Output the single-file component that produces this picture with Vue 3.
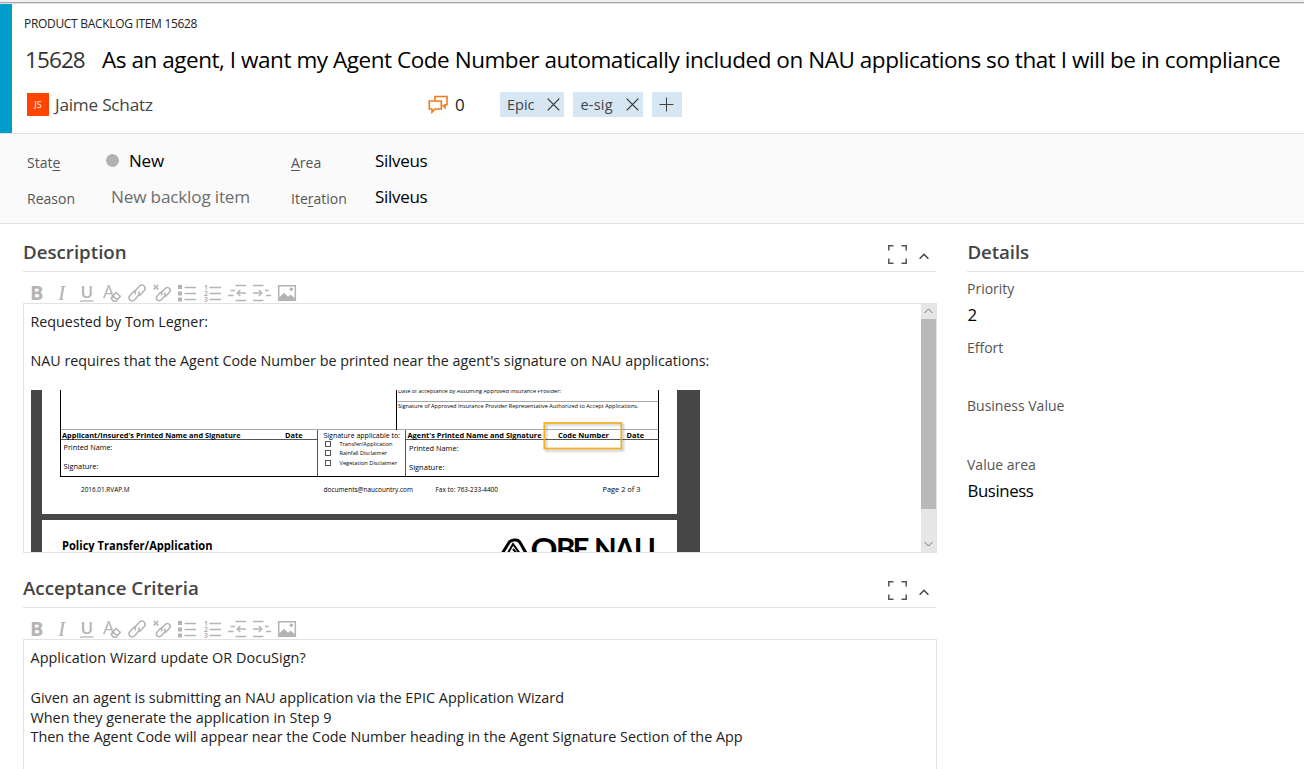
<script setup>
const tags = ['Epic', 'e-sig']

const tools = ['bold', 'italic', 'underline', 'clear', 'link', 'unlink', 'bullets', 'numbers', 'outdent', 'indent', 'image']

const sections = [
  { id: 'description', title: 'Description' },
  { id: 'criteria', title: 'Acceptance Criteria' },
]

const criteria = [
  { key: 'q', text: 'Application Wizard update OR DocuSign?' },
  { key: 'blank', text: '\u00a0' },
  { key: 'given', text: 'Given an agent is submitting an NAU application via the EPIC Application Wizard' },
  { key: 'when', text: 'When they generate the application in Step 9' },
  { key: 'then', text: 'Then the Agent Code will appear near the Code Number heading in the Agent Signature Section of the App' },
]

const details = [
  { label: 'Priority', value: '2' },
  { label: 'Effort', value: '' },
  { label: 'Business Value', value: '' },
  { label: 'Value area', value: 'Business' },
]

// Form labels: x, baseline, width, font size, weight
const formTexts = [
  { t: 'Date of acceptance by Assuming Approved Insurance Provider:', x: 398, y: 393, w: 163, s: 5.8 },
  { t: 'Signature of Approved Insurance Provider Representative Authorized to Accept Applications.', x: 398, y: 408, w: 240.5, s: 5.8 },
  { t: "Applicant/Insured's Printed Name and Signature", x: 62, y: 437.5, w: 178.5, s: 7.5, b: 1 },
  { t: 'Date', x: 285, y: 437.5, w: 17.5, s: 7.5, b: 1 },
  { t: 'Signature applicable to:', x: 323.5, y: 437.5, w: 76.5, s: 7.2 },
  { t: 'Transfer/Application', x: 339.5, y: 446, w: 53, s: 5.9 },
  { t: 'Rainfall Disclaimer', x: 339.5, y: 455.3, w: 47.5, s: 5.9 },
  { t: 'Vegetation Disclaimer', x: 339.5, y: 464.5, w: 57.5, s: 5.9 },
  { t: "Agent's Printed Name and Signature", x: 407.5, y: 437.5, w: 134, s: 7.5, b: 1 },
  { t: 'Code Number', x: 558, y: 437.5, w: 51, s: 7.5, b: 1 },
  { t: 'Date', x: 626.5, y: 437.5, w: 17.5, s: 7.5, b: 1 },
  { t: 'Printed Name:', x: 63.5, y: 450, w: 49, s: 7.5 },
  { t: 'Signature:', x: 63.5, y: 468.5, w: 35, s: 7.5 },
  { t: 'Printed Name:', x: 409, y: 450.7, w: 49.5, s: 7.5 },
  { t: 'Signature:', x: 409, y: 469.8, w: 35.5, s: 7.5 },
  { t: '2016.01.RVAP.M', x: 81, y: 492, w: 48.5, s: 6.6 },
  { t: 'documents@naucountry.com', x: 323.5, y: 492, w: 89.5, s: 6.6 },
  { t: 'Fax to: 763-233-4400', x: 435.5, y: 492, w: 62.5, s: 6.6 },
  { t: 'Page 2 of 3', x: 602.5, y: 492.2, w: 38, s: 7.3 },
  { t: 'Policy Transfer/Application', x: 62, y: 549.5, w: 150.5, s: 11.5, b: 1 },
]
</script>

<template>
  <div class="page">
    <div class="chrome"></div>

    <header class="head">
      <div class="kind">PRODUCT BACKLOG ITEM 15628</div>
      <div class="title-row">
        <span class="number">15628</span>
        <span class="title">As an agent, I want my Agent Code Number automatically included on NAU applications so that I will be in compliance</span>
      </div>
      <div class="meta">
        <div class="assignee">
          <span class="avatar">JS</span>
          <span class="name">Jaime Schatz</span>
        </div>
        <div class="comments">
          <svg width="20" height="19" viewBox="0 0 20 19" fill="none" stroke="#f07d1c" stroke-width="1.6">
            <path d="M7 5.700V1.500h12v8.300h-2v2.800l-2.600-2.600" />
            <path d="M1.300 6h12v8H7l-3 3.200v-3.200H1.300z" />
          </svg>
          <span class="count">0</span>
        </div>
        <div class="tags">
          <span v-for="t in tags" :key="t" class="tag" :class="t">
            <span class="tag-text">{{ t }}</span>
            <svg width="13" height="13" viewBox="0 0 13 13" stroke="#333" stroke-width="1.200">
              <path d="M.7.7l11.600 11.600M12.300.7L.7 12.300" />
            </svg>
          </span>
          <span class="tag add">
            <svg width="15" height="15" viewBox="0 0 15 15" stroke="#444" stroke-width="1.100">
              <path d="M7.500.5v14M.5 7.500h14" />
            </svg>
          </span>
        </div>
      </div>
    </header>

    <section class="facts">
      <span class="label">Stat<u>e</u></span>
      <span class="fact state"><i class="dot"></i>New</span>
      <span class="label"><u>A</u>rea</span>
      <span class="fact">Silveus</span>
      <span class="label">Reason</span>
      <span class="fact muted">New backlog item</span>
      <span class="label">Ite<u>r</u>ation</span>
      <span class="fact">Silveus</span>
    </section>

    <main class="body">
      <div class="left">
        <section v-for="s in sections" :key="s.id" class="section" :class="s.id">
          <div class="heading">
            <h2>{{ s.title }}</h2>
            <svg class="expand" width="19" height="19" viewBox="0 0 19 19" fill="none" stroke="#555" stroke-width="1.500">
              <path d="M.8 5.500V.8h4.700M13.500.8h4.700v4.700M18.200 13.500v4.700h-4.700M5.500 18.200H.8v-4.700" />
            </svg>
            <svg class="caret" width="10" height="7" viewBox="0 0 10 7" fill="none" stroke="#444" stroke-width="1.500">
              <path d="M.6 5.800L5 1.300l4.400 4.500" />
            </svg>
          </div>

          <div class="toolbar">
            <svg v-for="k in tools" :key="k" width="18" height="18" viewBox="0 0 18 18" class="tool">
              <text v-if="k === 'bold'" x="2" y="15.700" class="g-b">B</text>
              <text v-else-if="k === 'italic'" x="5" y="15.700" class="g-i">I</text>
              <template v-else-if="k === 'underline'">
                <text x="2.500" y="13.500" class="g-u">U</text>
                <path d="M2 17h13.500" />
              </template>
              <template v-else-if="k === 'clear'">
                <text x="0" y="14.300" class="g-a">A</text>
                <path d="M8.200 14l4.800-5.500 4.300 3.700-4.500 5H10.300zM9.800 12l4.700 3.600" class="thick" />
              </template>
              <g v-else-if="k === 'link'" class="thick">
                <path d="M7.800 10.300C6.500 8.800 6.700 7.400 7.800 6.200l3.600-3.900c3.300-3 7.600.7 4.900 4.200l-3.900 4.200c-.8.8-1.700 1-2.700.8" />
                <path d="M10.300 7.500c1.300 1.400 1.200 2.900.1 4.100l-3.700 4.100c-3.300 2.900-7.500-.8-4.800-4.200l3.900-4.200c.7-.7 1.500-.9 2.400-.9" />
              </g>
              <g v-else-if="k === 'unlink'" class="thick">
                <path d="M.8 1l4.400 4.400M5.200 1L.8 5.400" />
                <path d="M9.200 11.200C8.100 9.900 8.300 8.600 9.200 7.600l3-3.100c2.900-2.500 6.600.6 4.300 3.700l-3.300 3.500c-.7.6-1.400.8-2.200.6" />
                <path d="M11.300 8.700c1.100 1.200 1 2.500.1 3.500l-3.100 3.500c-2.900 2.500-6.500-.7-4.200-3.600l3.300-3.600c.6-.6 1.300-.8 2-.8" />
              </g>
              <template v-else-if="k === 'bullets'">
                <path d="M0 1h4v4H0zM0 7.500h4v4H0zM0 13.500h4v4H0z" class="solid" />
                <path d="M6.500 3.500H18M6.500 9.500H18M6.500 15.500H18" />
              </template>
              <template v-else-if="k === 'numbers'">
                <text x=".9" y="5.600" class="g-n">1</text>
                <text x=".9" y="11.800" class="g-n">2</text>
                <text x=".9" y="18" class="g-n">3</text>
                <path d="M6.500 3.500H18M6.500 9.500H18M6.500 15.500H18" />
              </template>
              <template v-else-if="k === 'outdent'">
                <path d="M7.500 1.500H18M2.500 6.500H7M0 11.500h5.500M7.500 16.500H18M9.300 9h8.700" />
                <path d="M12.300 6L9.200 9l3.100 3" class="thick" />
              </template>
              <template v-else-if="k === 'indent'">
                <path d="M0 1.500h10.500M12 6.500h3.500M13 11.500h5M0 16.500h10.500M0 9h8.700" />
                <path d="M5.700 6l3.100 3-3.100 3" class="thick" />
              </template>
              <template v-else>
                <path d="M.7 1.700h16.600v14.600H.7z" class="frame" />
                <path d="M1 13.500l5-4.800 4 4 2.500-2.200 4.500 4V16H1z" class="solid" />
                <circle cx="13.300" cy="5.300" r="1.700" class="solid" />
              </template>
            </svg>
          </div>

          <div v-if="s.id === 'description'" class="editor">
            <div class="content">
              <p class="req">Requested by Tom Legner:</p>
              <p>&nbsp;</p>
              <p class="nau">NAU requires that the Agent Code Number be printed near the agent's signature on NAU applications:</p>
              <svg class="form" width="669" height="162" viewBox="31 390 669 162">
                <rect x="31" y="390" width="669" height="162" fill="#464646" />
                <path d="M42 390h635v124H42zM42 520h635v32H42z" fill="#fff" />
                <g fill="none" shape-rendering="crispEdges">
                  <path d="M397 401.500h261M61 429.500h597" stroke="#aaa" />
                  <path d="M61 439.500h256M406 439.500h252M317.500 430v46M405.500 430v46" stroke="#555" />
                  <path d="M60.500 390v86.500h598V390M396.500 390v40" stroke="#000" />
                  <path d="M325.500 441.500h5v5h-5zM325.500 450.500h5v5h-5zM325.500 460.500h5v5h-5z" stroke="#555" />
                </g>
                <rect x="546" y="424.500" width="77" height="26" fill="none" stroke="#000" stroke-opacity=".3" stroke-width="1.500" class="shade" />
                <rect x="544.300" y="423" width="77" height="25.500" fill="none" stroke="#f6ae1c" stroke-width="1.700" />
                <text
                  v-for="(f, i) in formTexts"
                  :key="i"
                  :x="f.x"
                  :y="f.y"
                  :textLength="f.w"
                  :font-size="f.s"
                  :font-weight="f.b ? 700 : 400"
                  lengthAdjust="spacingAndGlyphs"
                >{{ f.t }}</text>
                <g fill="none" stroke="#000" stroke-width="3">
                  <path d="M502.500 553l6.500-10.500q2-2.500 5-2.500h1.500q3 0 4.500 2.500l6 10.500" />
                  <path d="M508 553l5-9 6.500 9M513 549l3.500 4" stroke-width="2" />
                </g>
                <text y="560" class="logo">
                  <tspan x="530.500" textLength="27" lengthAdjust="spacingAndGlyphs">Q</tspan><tspan x="556 572.500">BE</tspan>
                </text>
                <text x="594 614.500 634" y="560" class="logo">NAU</text>
              </svg>
            </div>
            <div class="bar">
              <svg width="9" height="6" viewBox="0 0 9 6" fill="none" stroke="#777"><path d="M.5 5l4-4 4 4" /></svg>
              <div class="thumb"></div>
              <svg width="9" height="6" viewBox="0 0 9 6" fill="none" stroke="#777"><path d="M.5 1l4 4 4-4" /></svg>
            </div>
          </div>
          <div v-else class="editor">
            <div class="content">
              <p v-for="c in criteria" :key="c.key" :class="c.key">{{ c.text }}</p>
            </div>
          </div>
        </section>
      </div>

      <aside class="right">
        <div class="heading"><h2>Details</h2></div>
        <div v-for="d in details" :key="d.label" class="field">
          <div class="field-label">{{ d.label }}</div>
          <div class="field-value">{{ d.value }}</div>
        </div>
      </aside>
    </main>
  </div>
</template>

<style>
html,
body {
  margin: 0;
  background: #fff;
  overflow: hidden;
}
</style>

<style scoped>
.page {
  width: 1304px;
  height: 769px;
  overflow: hidden;
  box-sizing: border-box;
  font-family: 'Open Sans', 'Noto Sans', sans-serif;
  color: #000;
  white-space: nowrap;
}
svg {
  display: block;
  flex: none;
}
.chrome {
  height: 2px;
  background: #f0f0f0;
  border-bottom: 1px solid #a8a8a8;
  box-shadow: 0 1px 0 #dedede;
  margin-bottom: 1px;
}
.head {
  height: 129px;
  box-sizing: border-box;
  border-left: 12px solid #009ccc;
  padding: 10px 0 0 12px;
}
.kind {
  font-size: 12px;
  line-height: 20px;
  letter-spacing: -0.31px;
  color: #222;
}
.title-row {
  display: flex;
  margin-top: 10px;
  padding-left: 1px;
  line-height: 32px;
  font-size: 22.5px;
}
.number {
  width: 77px;
  color: #333;
  letter-spacing: -0.9px;
}
.title {
  letter-spacing: -0.456px;
}
.meta {
  display: flex;
  align-items: center;
  height: 25px;
  margin-top: 16px;
  padding-left: 3px;
}
.assignee {
  display: flex;
  align-items: center;
  width: 401px;
}
.avatar {
  width: 22px;
  height: 23px;
  background: #ff4500;
  color: #fff;
  font-size: 9px;
  line-height: 23px;
  text-align: center;
}
.name {
  margin-left: 6px;
  font-size: 17.2px;
  color: #444;
  letter-spacing: -0.23px;
}
.comments {
  display: flex;
  align-items: center;
  gap: 7px;
  width: 72px;
}
.count {
  font-size: 17px;
  color: #222;
}
.tags {
  display: flex;
  gap: 9px;
}
.tag {
  display: flex;
  align-items: center;
  justify-content: space-between;
  box-sizing: border-box;
  height: 25px;
  padding: 0 4px 0 7px;
  background: #d6e6f3;
  color: #444;
  font-size: 14.5px;
}
.Epic {
  width: 64px;
}
.e-sig {
  width: 70px;
}
.e-sig .tag-text {
  margin-left: 0.5px;
  letter-spacing: 0.2px;
}
.add {
  width: 30px;
  padding: 0 1px 0 0;
  justify-content: center;
}
.facts {
  display: grid;
  grid-template-columns: 84px 180px 84px 200px;
  grid-auto-rows: 36px;
  height: 79px;
  padding: 10px 0 0 27px;
  background: #fafafa;
  border-top: 1px solid #e2e2e2;
  border-bottom: 1px solid #e2e2e2;
}
.label {
  font-size: 14px;
  line-height: 38px;
  color: #555;
}
.label u {
  text-underline-offset: 2px;
}
.fact {
  display: flex;
  align-items: center;
  font-size: 17px;
  line-height: 33px;
  height: 33px;
  letter-spacing: -0.3px;
}
.state {
  letter-spacing: -0.2px;
}
.muted {
  color: #6e6e6e;
  font-size: 17.2px;
  letter-spacing: -0.2px;
}
.dot {
  width: 13px;
  height: 13px;
  border-radius: 50%;
  background: #b2b2b2;
  margin: -1px 10px 0 -5px;
}
.body {
  display: flex;
  gap: 30px;
  padding: 10px 0 0 23px;
}
.left {
  width: 914px;
}
.right {
  flex: 1;
}
.heading {
  display: flex;
  height: 37px;
  border-bottom: 1px solid #e2e2e2;
}
.left .heading {
  margin-right: 1px;
}
h2 {
  margin: 0;
  flex: 1;
  font-size: 18.7px;
  font-weight: 600;
  line-height: 36px;
  color: #444;
}
.right h2 {
  padding-left: 0.5px;
  letter-spacing: -0.1px;
}
.expand {
  margin-top: 11px;
}
.caret {
  margin: 19px 7px 0 12px;
}
.toolbar {
  display: flex;
  gap: 7px;
  height: 19px;
  padding: 12px 0 0 5px;
}
.tool {
  fill: none;
  stroke: #b4b4b4;
  stroke-width: 1.3;
  overflow: visible;
}
.tool text,
.tool .solid {
  fill: #b4b4b4;
  stroke: none;
}
.tool .thick {
  stroke-width: 1.5;
}
.tool .frame {
  stroke-width: 1.6;
}
.g-b {
  font-size: 20px;
  font-weight: 700;
}
.g-i {
  font-family: 'Liberation Serif', serif;
  font-style: italic;
  font-size: 22px;
}
.g-u {
  font-size: 17px;
  font-weight: 600;
}
.g-a {
  font-size: 18px;
}
.g-n {
  font-size: 6.8px;
  font-weight: 700;
}
.editor {
  display: flex;
  height: 248px;
  border: 1px solid #e2e2e2;
  overflow: hidden;
}
.section.description {
  margin-bottom: 17px;
}
.content {
  flex: 1;
  min-width: 0;
  padding: 8px 0 0 6.5px;
  overflow: hidden;
  color: #222;
  font-size: 14.3px;
  line-height: 19.7px;
}
.criteria .content {
  font-size: 14.4px;
}
.criteria .q {
  letter-spacing: 0.05px;
}
.criteria .blank {
  height: 20.7px;
}
.criteria .then {
  margin-top: -0.8px;
}
.content p {
  margin: 0;
}
.form {
  margin: 19px 0 0 0.5px;
}
.shade {
  filter: blur(1px);
}
.logo {
  font-family: Lato, sans-serif;
  font-weight: 700;
  font-size: 29.5px;
}
.bar {
  display: flex;
  flex-direction: column;
  align-items: center;
  width: 15px;
  box-sizing: border-box;
  padding-top: 4px;
  background: #e6e6e6;
}
.thumb {
  flex: none;
  width: 15px;
  height: 190px;
  margin: 5px 0 32px;
  background: #b9b9b9;
}
.field {
  height: 58.6px;
}
.heading + .field {
  margin-top: 5px;
}
.field-label {
  font-size: 14px;
  line-height: 24px;
  color: #555;
}
.field-value {
  font-size: 16.8px;
  line-height: 28px;
  letter-spacing: -0.4px;
  padding-left: 0.5px;
}
</style>
